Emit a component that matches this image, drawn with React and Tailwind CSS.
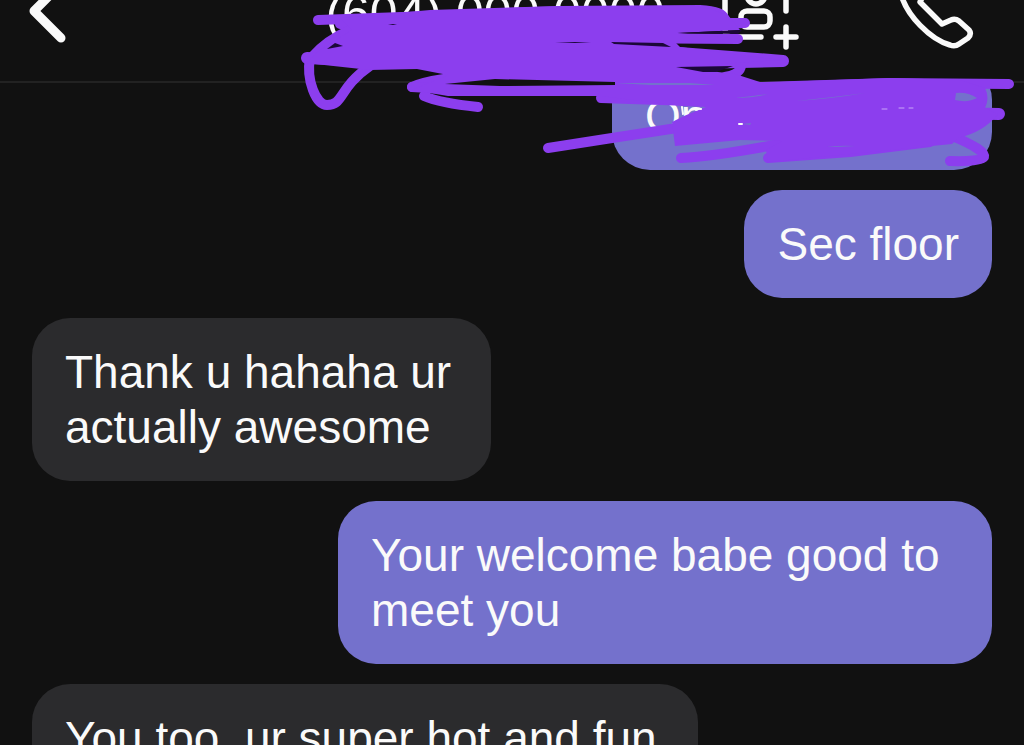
const messages = [
    { id: 1, mine: true, text: 'On', width: 'w-[380px] -mt-[21px]' },
    { id: 2, mine: true, text: 'Sec floor', width: 'max-w-[654px]' },
    { id: 3, mine: false, text: 'Thank u hahaha ur actually awesome', width: 'max-w-[459px]' },
    { id: 4, mine: true, text: 'Your welcome babe good to meet you', width: 'max-w-[654px]' },
    { id: 5, mine: false, text: 'You too, ur super hot and fun', width: 'w-[666px]' },
]

function BackIcon() {
    return (
        <svg width="48" height="72" viewBox="0 0 48 72" fill="none" stroke="currentColor" strokeWidth="9" strokeLinecap="round" strokeLinejoin="round" aria-hidden="true">
            <path d="M41 10L14 37L41 64" />
        </svg>
    )
}

function AddContactIcon() {
    return (
        <svg width="80" height="80" viewBox="0 -2 80 80" fill="none" stroke="currentColor" strokeWidth="5.5" strokeLinecap="round" strokeLinejoin="round" aria-hidden="true">
            <path d="M65 39V17Q65 9 57 9H12Q4 9 4 17V57Q4 65 12 65H40" />
            <circle cx="35" cy="23" r="9" />
            <rect x="20" y="39" width="29" height="16" rx="6" />
            <path d="M65 55V75M55 65H75" />
        </svg>
    )
}

function PhoneIcon() {
    return (
        <svg width="76" height="80" viewBox="0 -2 76 80" fill="none" stroke="currentColor" strokeWidth="5.5" strokeLinecap="round" strokeLinejoin="round" aria-hidden="true">
            <path d="M2 18C7 44 34 68 52 73Q57 75 61 72L70 66Q74 62 71 58L61 49Q57 46 53 48L44 52L22 30L27 20Q30 16 27 13L19 4Q16 1 12 4L5 11Q2 14 2 18Z" />
        </svg>
    )
}

// Marker strokes over the private details
function Scribble() {
    return (
        <svg className="absolute left-0 top-0 w-full pointer-events-none" viewBox="0 0 1024 180" fill="none" strokeLinecap="round" strokeLinejoin="round" aria-hidden="true">
            <g stroke="#8c3eee" strokeWidth="10">
                <path d="M318 20L430 16L560 11L700 10Q722 11 724 18" />
                <path d="M340 24L745 23L680 26" />
                <path d="M360 36L738 39" />
                <path d="M350 30Q327 40 313 56" />
                <path strokeWidth="12" d="M307 58L350 60L500 50L640 50L783 61L600 65" />
                <path d="M310 58C306 80 316 105 327 105C344 105 338 88 370 66" />
                <path d="M412 87Q430 78 500 73" />
                <path d="M412 87L480 91L600 91L740 88" />
                <path d="M424 96Q440 103 478 107" />
                <path d="M741 66Q740 74 725 77" />
                <path d="M601 98L690 101L740 98" />
                <path d="M548 148L612 138L690 126L740 112" />
                <path d="M681 158Q720 156 800 140" />
                <path d="M768 158L850 152L930 142" />
                <path d="M780 87L890 83L1009 84" />
                <path strokeWidth="12" d="M900 112L999 114" />
                <path d="M952 136Q986 150 984 157Q980 162 950 161" />
            </g>
            <path fill="#8c3eee" d="M340 18L430 10L560 6L700 6L728 15L740 30L678 33L738 39L676 43L680 47L780 60L676 67L735 74L760 82L890 78L960 80L985 88Q990 98 985 108L998 114Q984 132 958 138L952 144L768 162L766 150L782 141L740 140L675 146L672 122L684 116L706 107L684 106L600 96L448 96L412 90L448 75L417 69L370 70L306 63L320 50L352 30Z" />
            <g fill="#1b0838">
                <path d="M327 49L335 43L343 46Z" />
                <path fill="#111111" d="M445 84L495 79L615 82L615 85L500 86Z" />
                <path d="M677 33L742 30L738 34Z" />
                <path d="M611 42L663 43L671 47L614 44Z" />
                <path d="M676 67L733 66L716 72L703 72Z" />
                <path d="M555 42L591 42L575 43Z" />
                <path d="M388 24L397 24L393 25Z" />
            </g>
            <g fill="#7471cc">
                <path d="M956 93Q968 92 977 98Q968 103 955 100Z" />
                <path d="M615 83L690 83L715 85L650 85Z" />
                <path d="M796 101Q835 97 865 93Q830 99 796 101Z" />
                <path d="M735 98Q755 96 768 94Q755 98 735 98Z" />
                <path d="M827 147Q840 145 855 146Q840 147 827 147Z" />
                <path d="M742 124L751 123L750 125Z" />
            </g>
            <path stroke="#fafafa" strokeWidth="2" d="M682 107L683 114M696 110Q699 108 701 109M739 124L742 124" />
            <path stroke="#c9a6f8" strokeWidth="1" d="M882 109L887 109M899 108L904 108M909 108L913 108" />
        </svg>
    )
}

function Message({ message }) {
    const side = message.mine ? 'self-end bg-[#7471cc]' : 'self-start bg-[#2b2b2d]'
    return (
        <li className={`shrink-0 rounded-[38px] px-[33px] pt-[27px] pb-[26px] text-[46px] leading-[55px] ${side} ${message.width}`}>
            {message.text}
        </li>
    )
}

export default function App() {
    return (
        <div className="relative flex h-screen flex-col overflow-hidden bg-[#111111] font-['Liberation_Sans',Arial,sans-serif] text-[#fafafa]">
            <header className="-mt-[61px] grid h-36 shrink-0 grid-cols-[1fr_auto_1fr] items-center border-b-2 border-[#222222] pl-4 pr-[50px]">
                <button type="button" aria-label="Back" className="justify-self-start pl-1">
                    <BackIcon />
                </button>
                <h1 className="pt-2 text-[50px] leading-[60px]">(604) 000 0000</h1>
                <div className="flex items-center justify-between pl-14">
                    <button type="button" aria-label="Add contact">
                        <AddContactIcon />
                    </button>
                    <button type="button" aria-label="Call">
                        <PhoneIcon />
                    </button>
                </div>
            </header>

            <main className="min-h-0 flex-1 overflow-hidden px-8">
                <ul className="flex flex-col gap-5">
                    {messages.map(message => (
                        <Message key={message.id} message={message} />
                    ))}
                </ul>
            </main>

            <Scribble />
        </div>
    )
}
